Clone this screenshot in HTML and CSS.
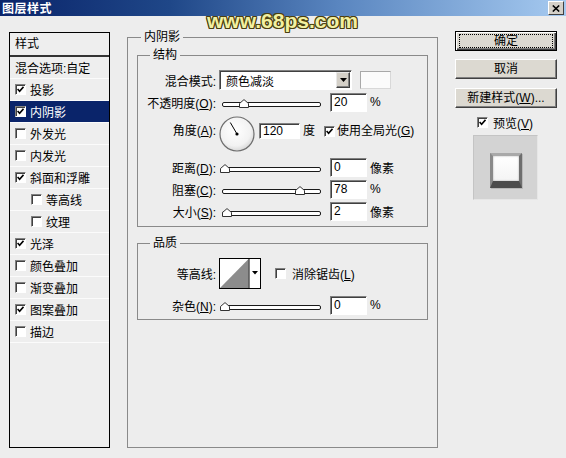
FILE: index.html
```html
<!DOCTYPE html>
<html>
<head>
<meta charset="utf-8">
<title>图层样式</title>
<link rel="stylesheet" href="styles.css">
</head>
<body>
<div class="dialog">
  <div class="titlebar">
    <span class="title">图层样式</span>
    <span class="close"><svg width="8" height="7" viewBox="0 0 8 7"><path d="M0.8 0.5 L7.2 6.5 M7.2 0.5 L0.8 6.5" stroke="#000" stroke-width="1.6"/></svg></span>
  </div>
  <div class="watermark">www.68ps.com</div>

  <div class="content">
    <div class="stylelist">
      <div class="list-head">样式</div>
      <div class="item">混合选项:自定</div>
      <div class="item"><span class="cb"><svg width="7" height="7" viewBox="0 0 7 7"><path d="M0.6 3 L2.6 5.2 L6.5 0.8" fill="none" stroke="#000" stroke-width="1.6"/></svg></span>投影</div>
      <div class="item sel"><span class="cb"><svg width="7" height="7" viewBox="0 0 7 7"><path d="M0.6 3 L2.6 5.2 L6.5 0.8" fill="none" stroke="#000" stroke-width="1.6"/></svg></span>内阴影</div>
      <div class="item"><span class="cb"></span>外发光</div>
      <div class="item"><span class="cb"></span>内发光</div>
      <div class="item"><span class="cb"><svg width="7" height="7" viewBox="0 0 7 7"><path d="M0.6 3 L2.6 5.2 L6.5 0.8" fill="none" stroke="#000" stroke-width="1.6"/></svg></span>斜面和浮雕</div>
      <div class="item sub"><span class="cb"></span>等高线</div>
      <div class="item sub"><span class="cb"></span>纹理</div>
      <div class="item"><span class="cb"><svg width="7" height="7" viewBox="0 0 7 7"><path d="M0.6 3 L2.6 5.2 L6.5 0.8" fill="none" stroke="#000" stroke-width="1.6"/></svg></span>光泽</div>
      <div class="item"><span class="cb"></span>颜色叠加</div>
      <div class="item"><span class="cb"></span>渐变叠加</div>
      <div class="item"><span class="cb"><svg width="7" height="7" viewBox="0 0 7 7"><path d="M0.6 3 L2.6 5.2 L6.5 0.8" fill="none" stroke="#000" stroke-width="1.6"/></svg></span>图案叠加</div>
      <div class="item"><span class="cb"></span>描边</div>
    </div>

    <fieldset class="group main">
      <legend>内阴影</legend>

      <fieldset class="group sub-group struct">
        <legend>结构</legend>

        <div class="row">
          <span class="lbl">混合模式:</span>
          <div class="select"><span class="sel-text">颜色减淡</span><span class="dd"><svg width="7" height="4" viewBox="0 0 7 4"><path d="M0 0 L7 0 L3.5 4 Z" fill="#000"/></svg></span></div>
          <span class="swatch"></span>
        </div>

        <div class="row">
          <span class="lbl">不透明度(<u>O</u>):</span>
          <div class="slider"><span class="track"></span><svg class="thumb" style="left:20px" width="10" height="9" viewBox="0 0 10 9"><path d="M0.5 8.5 L0.5 4.5 L5 0.6 L9.5 4.5 L9.5 8.5 Z" fill="#fff" stroke="#333"/></svg></div>
          <span class="num">20</span><span class="unit">%</span>
        </div>

        <div class="row angle-row">
          <span class="lbl lbl-angle">角度(<u>A</u>):</span>
          <svg class="dial" width="36" height="36" viewBox="0 0 36 36">
            <defs><radialGradient id="dg" cx="0.45" cy="0.4" r="0.6"><stop offset="0" stop-color="#ffffff"/><stop offset="0.75" stop-color="#f2f2f2"/><stop offset="1" stop-color="#d8d8d8"/></radialGradient></defs>
            <circle cx="18" cy="18" r="17" fill="url(#dg)" stroke="#6e6e6e" stroke-width="1.2"/>
            <line x1="18" y1="18" x2="11.3" y2="6.5" stroke="#000" stroke-width="1"/>
            <circle cx="18" cy="18" r="1.6" fill="#000"/>
          </svg>
          <span class="num num-angle">120</span>
          <span class="unit unit-angle">度</span>
          <span class="cb cb-global"><svg width="7" height="7" viewBox="0 0 7 7"><path d="M0.6 3 L2.6 5.2 L6.5 0.8" fill="none" stroke="#000" stroke-width="1.6"/></svg></span>
          <span class="cb-text">使用全局光(<u>G</u>)</span>
        </div>

        <div class="row row-gap">
          <span class="lbl">距离(<u>D</u>):</span>
          <div class="slider"><span class="track"></span><svg class="thumb" style="left:1px" width="10" height="9" viewBox="0 0 10 9"><path d="M0.5 8.5 L0.5 4.5 L5 0.6 L9.5 4.5 L9.5 8.5 Z" fill="#fff" stroke="#333"/></svg></div>
          <span class="num">0</span><span class="unit">像素</span>
        </div>

        <div class="row">
          <span class="lbl">阻塞(<u>C</u>):</span>
          <div class="slider"><span class="track"></span><svg class="thumb" style="left:76px" width="10" height="9" viewBox="0 0 10 9"><path d="M0.5 8.5 L0.5 4.5 L5 0.6 L9.5 4.5 L9.5 8.5 Z" fill="#fff" stroke="#333"/></svg></div>
          <span class="num">78</span><span class="unit">%</span>
        </div>

        <div class="row">
          <span class="lbl">大小(<u>S</u>):</span>
          <div class="slider"><span class="track"></span><svg class="thumb" style="left:3px" width="10" height="9" viewBox="0 0 10 9"><path d="M0.5 8.5 L0.5 4.5 L5 0.6 L9.5 4.5 L9.5 8.5 Z" fill="#fff" stroke="#333"/></svg></div>
          <span class="num">2</span><span class="unit">像素</span>
        </div>
      </fieldset>

      <fieldset class="group sub-group quality">
        <legend>品质</legend>

        <div class="row contour-row">
          <span class="lbl">等高线:</span>
          <svg class="contour" width="42" height="31" viewBox="0 0 42 31">
            <rect x="0.5" y="0.5" width="41" height="30" fill="#fff" stroke="#000"/>
            <polygon points="1,30 29.5,1 29.5,30" fill="#8c8c8c"/>
            <line x1="30" y1="0.5" x2="30" y2="30.5" stroke="#000"/>
            <path d="M33 13 L39 13 L36 16.5 Z" fill="#000"/>
          </svg>
          <span class="cb cb-aa"></span>
          <span class="cb-text">消除锯齿(<u>L</u>)</span>
        </div>

        <div class="row row-noise">
          <span class="lbl">杂色(<u>N</u>):</span>
          <div class="slider"><span class="track"></span><svg class="thumb" style="left:1px" width="10" height="9" viewBox="0 0 10 9"><path d="M0.5 8.5 L0.5 4.5 L5 0.6 L9.5 4.5 L9.5 8.5 Z" fill="#fff" stroke="#333"/></svg></div>
          <span class="num">0</span><span class="unit">%</span>
        </div>
      </fieldset>
    </fieldset>

    <div class="side">
      <div class="btn default"><span class="focus">确定</span></div>
      <div class="btn btn-cancel">取消</div>
      <div class="btn btn-new">新建样式(<u>W</u>)...</div>
      <div class="preview-row"><span class="cb"><svg width="7" height="7" viewBox="0 0 7 7"><path d="M0.6 3 L2.6 5.2 L6.5 0.8" fill="none" stroke="#000" stroke-width="1.6"/></svg></span><span class="pv-text">预览(<u>V</u>)</span></div>
      <div class="preview"><div class="pv-sq"></div></div>
    </div>
  </div>
</div>
</body>
</html>
```

FILE: styles.css
```css
* { box-sizing: border-box; }
html, body { margin: 0; padding: 0; }
body {
  width: 566px;
  height: 458px;
  overflow: hidden;
  background: #ededed;
  font-family: "Liberation Sans", "Noto Sans CJK SC", sans-serif;
  font-size: 12px;
  color: #000;
}
.dialog { position: relative; width: 566px; height: 458px; }

.titlebar {
  height: 16px;
  background: linear-gradient(90deg, #0a246a 0%, #1f4788 30%, #5a86c0 60%, #a6caf0 100%);
  display: flex;
  align-items: center;
  justify-content: space-between;
  padding: 0 2px;
}
.title {
  display: block;
  color: #fff;
  font-weight: bold;
  font-size: 12px;
  line-height: 16px;
  letter-spacing: 0.5px;
  font-family: "Noto Sans CJK SC", sans-serif;
}
.close {
  width: 16px;
  height: 14px;
  background: #d4d0c8;
  border: 1px solid;
  border-color: #fff #404040 #404040 #fff;
  display: flex;
  align-items: center;
  justify-content: center;
}

.watermark {
  position: absolute;
  left: 207px;
  top: 10px;
  font-family: "Liberation Sans", sans-serif;
  font-weight: bold;
  font-size: 21px;
  line-height: 22px;
  color: #f2f0a0;
  text-shadow: 1px 0 0 #4a3f12, -1px 0 0 #4a3f12, 0 1px 0 #4a3f12, 0 -1px 0 #4a3f12,
               1px 1px 0 #4a3f12, -1px -1px 0 #4a3f12, 1px -1px 0 #4a3f12, -1px 1px 0 #4a3f12;
  z-index: 5;
}

.content { display: flex; align-items: flex-start; }

/* left style list */
.stylelist {
  margin: 16px 0 0 9px;
  width: 101px;
  height: 416px;
  border: 1px solid #000;
  background: #eeeeee;
  flex: none;
}
.list-head {
  height: 24px;
  line-height: 22px;
  padding-left: 5px;
  border-bottom: 2px solid #333;
}
.item {
  height: 22px;
  display: flex;
  align-items: center;
  padding-left: 5px;
  border-bottom: 1px solid #fbfbfb;
  white-space: nowrap;
}
.item.sub { padding-left: 21px; }
.item.sel { background: #0a246a; color: #fff; }
.item .cb { margin-right: 4px; }

.cb {
  display: inline-block;
  flex: none;
  width: 11px;
  height: 11px;
  background: #fff;
  border: 1px solid;
  border-color: #808080 #fff #fff #808080;
  box-shadow: inset 1px 1px 0 #404040;
}
.cb svg { display: block; margin: 1px 0 0 1px; }

/* group boxes */
.group {
  margin: 0;
  min-width: 0;
  border: 1px solid #8a8a8a;
  padding: 0;
}
.group > legend {
  padding: 0 3px;
  font-size: 12px;
  line-height: 14px;
}
.main {
  margin: 14px 0 0 17px;
  width: 311px;
  height: 418px;
  padding: 0 9px;
  flex: none;
}
.main > legend { margin-left: 4px; }
.sub-group { padding: 7px 0 4px 4px; }
.sub-group > legend { margin-left: 8px; }
.struct { margin-top: 4px; }
.quality { margin-top: 9px; padding-bottom: 3px; }

.row {
  display: flex;
  align-items: center;
  height: 22px;
  white-space: nowrap;
}
.lbl {
  width: 74px;
  margin-right: 3px;
  text-align: right;
  flex: none;
}

.select {
  width: 133px;
  height: 20px;
  background: #fff;
  border: 1px solid;
  border-color: #808080 #fff #fff #808080;
  box-shadow: inset 1px 1px 0 #404040;
  display: flex;
  align-items: center;
  justify-content: space-between;
  padding: 0 1px 0 6px;
}
.dd {
  width: 14px;
  height: 16px;
  background: #d4d0c8;
  border: 1px solid;
  border-color: #e8e8e8 #404040 #404040 #e8e8e8;
  box-shadow: inset -1px -1px 0 #808080;
  display: flex;
  align-items: center;
  justify-content: center;
}
.swatch {
  width: 31px;
  height: 18px;
  margin-left: 8px;
  background: #fbfbfb;
  border: 1px solid #a8a8a8;
  border-right-color: #d8d8d8;
  border-bottom-color: #d8d8d8;
}

.slider {
  position: relative;
  width: 102px;
  height: 22px;
  flex: none;
  padding: 11px 0 0 3px;
}
.track {
  display: block;
  height: 5px;
  background: #fff;
  border: 1px solid #1a1a1a;
  border-radius: 2px;
}
.thumb { position: absolute; top: 8px; }

.num {
  width: 37px;
  height: 19px;
  margin-left: 9px;
  padding-left: 3px;
  line-height: 17px;
  background: #fff;
  border: 1px solid;
  border-color: #808080 #fff #fff #808080;
  box-shadow: inset 1px 1px 0 #404040;
  flex: none;
}
.unit { margin-left: 3px; }

.angle-row {
  height: 35px;
  margin-top: 3px;
  align-items: flex-start;
}
.lbl-angle { margin-top: 7px; line-height: 16px; }
.dial { display: block; margin-left: 0; flex: none; }
.num-angle { width: 41px; height: 16px; line-height: 14px; margin: 7px 0 0 4px; }
.unit-angle { margin-top: 7px; line-height: 16px; }
.cb-global { margin: 10px 2px 0 9px; }
.angle-row .cb-text { margin-top: 7px; line-height: 16px; }
.row-gap { margin-top: 5px; }

.contour-row { height: 32px; }
.contour { display: block; flex: none; }
.cb-aa { margin: 0 6px 0 14px; }
.row-noise { margin-top: 5px; }

/* right side */
.side {
  margin: 15px 0 0 17px;
  width: 102px;
  display: flex;
  flex-direction: column;
  flex: none;
}
.btn {
  height: 20px;
  background: #dcd9d1;
  border: 1px solid;
  border-color: #fff #404040 #404040 #fff;
  box-shadow: inset -1px -1px 0 #808080;
  text-align: center;
  line-height: 18px;
  white-space: nowrap;
}
.btn.default {
  border: 1px solid #000;
  box-shadow: inset 1px 1px 0 #fff, inset -1px -1px 0 #404040, inset -2px -2px 0 #808080;
  padding: 2px 3px;
  line-height: 12px;
}
.focus {
  display: block;
  height: 14px;
  line-height: 12px;
  border: 1px dotted #000;
}
.btn-cancel { margin-top: 8px; }
.btn-new { margin-top: 9px; }
.preview-row {
  margin-top: 6px;
  height: 16px;
  display: flex;
  align-items: center;
  padding-left: 22px;
}
.pv-text { margin-left: 5px; }
.preview {
  margin: 5px 0 0 18px;
  width: 65px;
  height: 65px;
  background: #d3d3d3;
  border: 1px solid #c4c4c4;
  border-right-color: #e6e6e6;
  border-bottom-color: #e6e6e6;
  padding: 17px 0 0 16px;
}
.pv-sq {
  width: 32px;
  height: 35px;
  background: linear-gradient(#ffffff, #f4f4f4);
  border-style: solid;
  border-width: 3px 3px 7px 3px;
  border-color: #a9a9a9 #6e6e6e #4c4c4c #8a8a8a;
  box-shadow: inset 0 0 2px rgba(0,0,0,0.35), 1px 1px 0 #b8b8b8;
}
```
